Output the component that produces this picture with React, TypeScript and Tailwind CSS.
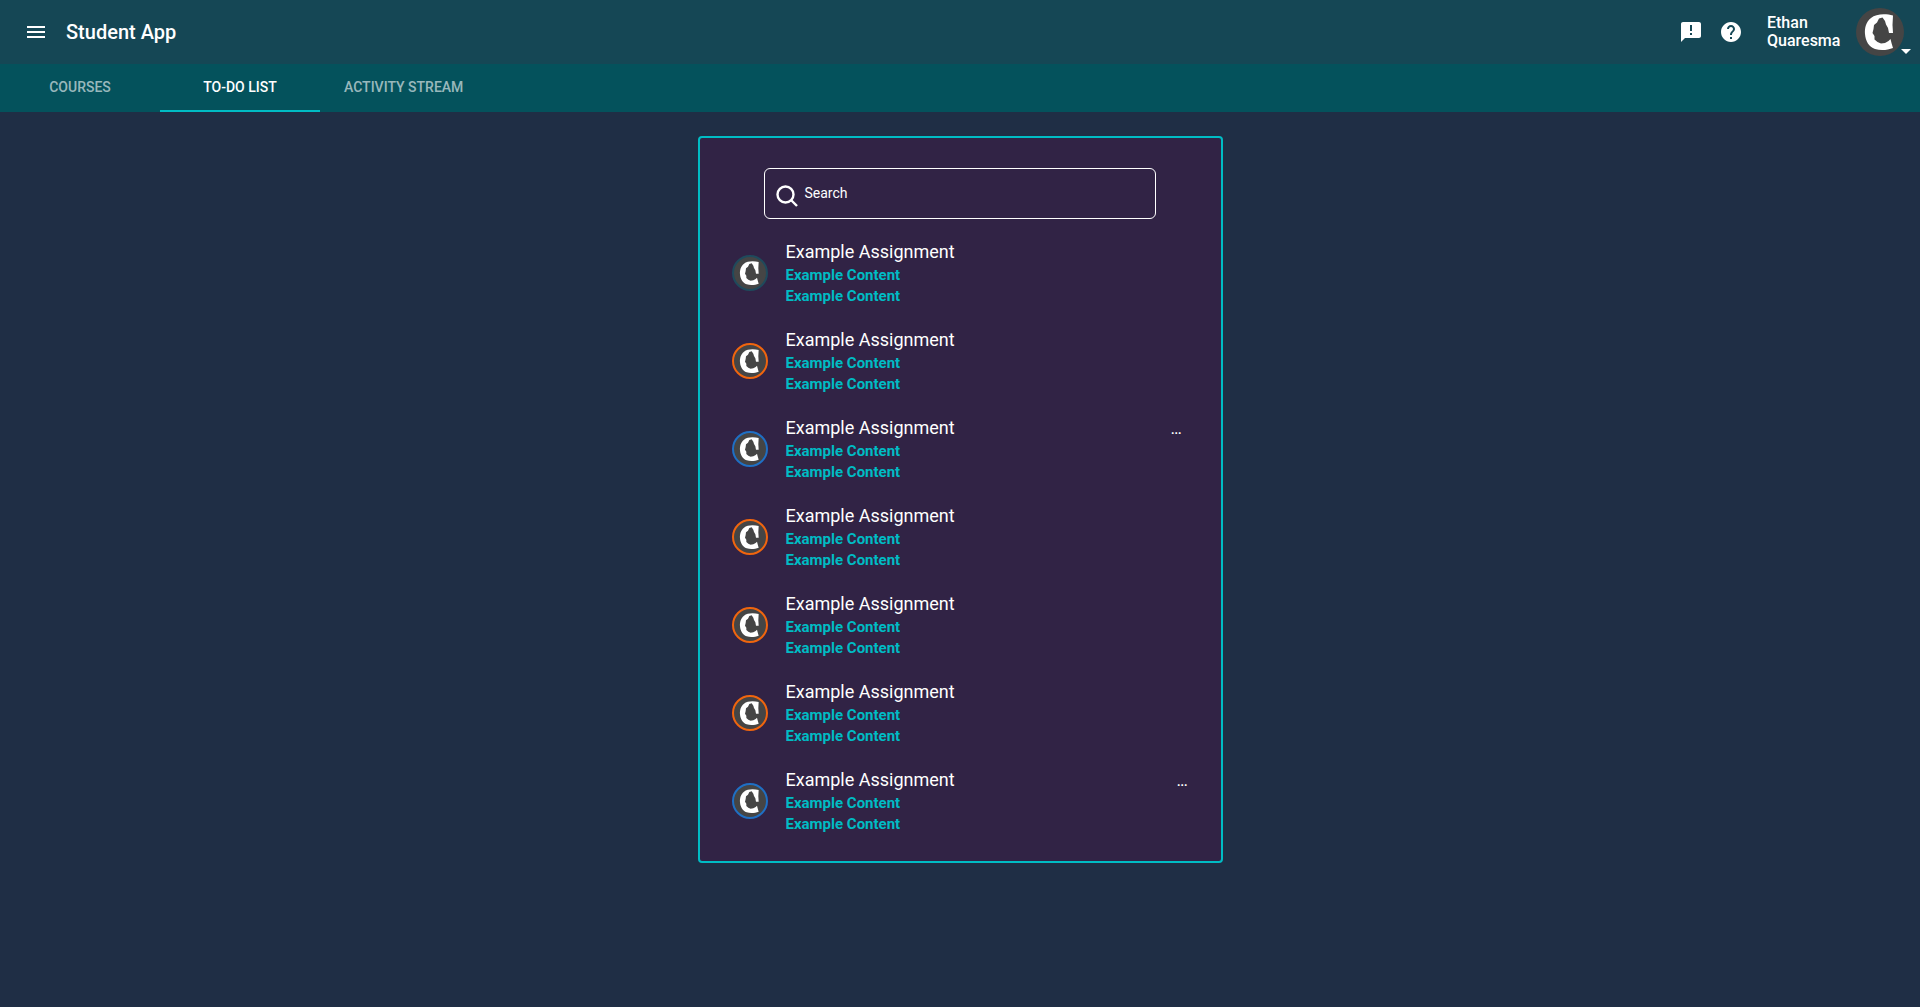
import React from "react";

const font = { fontFamily: "Roboto, sans-serif" };

function Logo({ ring, size = 36, border = 2 }: { ring: string; size?: number; border?: number }) {
  return (
    <div
      className="shrink-0 rounded-full bg-[#454545] flex items-center justify-center"
      style={{ width: size, height: size, border: `${border}px solid ${ring}` }}
    >
      <svg viewBox="0 0 48 48" width={size - border * 2} height={size - border * 2}>
        <path
          fill="#fff"
          d="M37 7.5 C30 5.5 20 5.5 15 10 C10 14 8.5 20 9 26 C9.5 33 13 39 19 41 C25 43 32 42 37 40 L35.5 35 L34.5 31 L32.5 33 L29 35 L25 35.5 L21.5 34 L18.5 31.5 L18.5 28 L16.5 25 L17.5 21 L18 17 L21 14.5 L23 10.5 L26.5 9.5 L29 13 L30 16.5 L32 20 L33 25 L37 25 L36.5 17 Z"
        />
      </svg>
    </div>
  );
}

const rows: { ring: string; dots?: string }[] = [
  { ring: "#1f4a5c" },
  { ring: "#f0650e" },
  { ring: "#1f6fc4", dots: "mr-[39px]" },
  { ring: "#f0650e" },
  { ring: "#f0650e" },
  { ring: "#f0650e" },
  { ring: "#1f6fc4", dots: "mr-[33px]" },
];

export default function App() {
  return (
    <div className="min-h-[1007px] bg-[#1f2e45] text-white flex flex-col" style={font}>
      <header className="h-16 bg-[#154755] flex items-center pl-6 pr-[7px]">
        <svg width="24" height="24" viewBox="0 0 24 24" fill="#fff" className="mr-[18px]">
          <path d="M3 18h18v-2H3v2zm0-5h18v-2H3v2zm0-7v2h18V6H3z" />
        </svg>
        <div className="text-[20px] font-medium leading-8">Student App</div>
        <div className="ml-auto flex items-center">
          <svg width="24" height="24" viewBox="0 0 24 24" fill="#fff" className="mr-[16px]">
            <path d="M20 2H4c-1.1 0-1.99.9-1.99 2L2 22l4-4h14c1.1 0 2-.9 2-2V4c0-1.1-.9-2-2-2zm-7 9h-2V5h2v6zm0 4h-2v-2h2v2z" />
          </svg>
          <svg width="24" height="24" viewBox="0 0 24 24" fill="#fff" className="mr-[24px]">
            <path d="M12 2C6.48 2 2 6.48 2 12s4.48 10 10 10 10-4.48 10-10S17.52 2 12 2zm1 17h-2v-2h2v2zm2.07-7.75l-.9.92C13.45 12.9 13 13.5 13 15h-2v-.5c0-1.1.45-2.1 1.17-2.83l1.24-1.26c.37-.36.59-.86.59-1.41 0-1.1-.9-2-2-2s-2 .9-2 2H8c0-2.21 1.79-4 4-4s4 1.79 4 4c0 .88-.36 1.68-.93 2.25z" />
          </svg>
          <div className="text-[16px] font-medium leading-[18px] w-[89px]">
            Ethan
            <br />
            Quaresma
          </div>
          <div className="relative">
            <Logo ring="#454545" size={48} border={0} />
            <div className="absolute right-[-7px] bottom-[2px] w-0 h-0 border-x-[5px] border-x-transparent border-t-[5px] border-t-white" />
          </div>
          <div className="w-[9px]" />
        </div>
      </header>

      <nav className="h-12 bg-[#04525c] flex text-[14px] font-medium uppercase">
        <div className="w-40 flex items-center justify-center border-b-2 border-transparent text-white/60">Courses</div>
        <div className="w-40 flex items-center justify-center border-b-2 border-[#00bcc4]">To-do list</div>
        <div className="px-6 flex items-center justify-center border-b-2 border-transparent text-white/60">Activity stream</div>
      </nav>

      <main className="flex justify-center pt-6">
        <section className="w-[525px] h-[727px] rounded-[4px] border-2 border-[#00bcc4] bg-[#312345] pt-[30px]">
          <div className="ml-[64px] w-[392px] h-[51px] rounded-[6px] border border-white flex items-center pl-[10px]">
            <svg width="24" height="24" viewBox="0 0 24 24" fill="none" stroke="#fff" strokeWidth="2.4" className="mt-[4px]">
              <circle cx="10.5" cy="10.5" r="8" />
              <path d="M16.5 16.5 L22 22" />
            </svg>
            <span className="text-[14px] ml-[6px]">Search</span>
          </div>
          <ul className="mt-[11px]">
            {rows.map((r, i) => (
              <li key={i} className="h-[88px] flex items-center pl-[32px]">
                <div className="-mt-[2px]">
                  <Logo ring={r.ring} />
                </div>
                <div className="flex-1 ml-[18px] -mt-[1px]">
                  <div className="flex items-start h-[25px]">
                    <span className="text-[18px] leading-[24px]">Example Assignment</span>
                    {r.dots && (
                      <span className={`ml-auto text-[12px] font-bold leading-[22px] mt-[3px] ${r.dots}`}>...</span>
                    )}
                  </div>
                  <div className="text-[15px] font-bold text-[#00bcc4] leading-[21px]">Example Content</div>
                  <div className="text-[15px] font-bold text-[#00bcc4] leading-[21px]">Example Content</div>
                </div>
              </li>
            ))}
          </ul>
        </section>
      </main>
    </div>
  );
}
